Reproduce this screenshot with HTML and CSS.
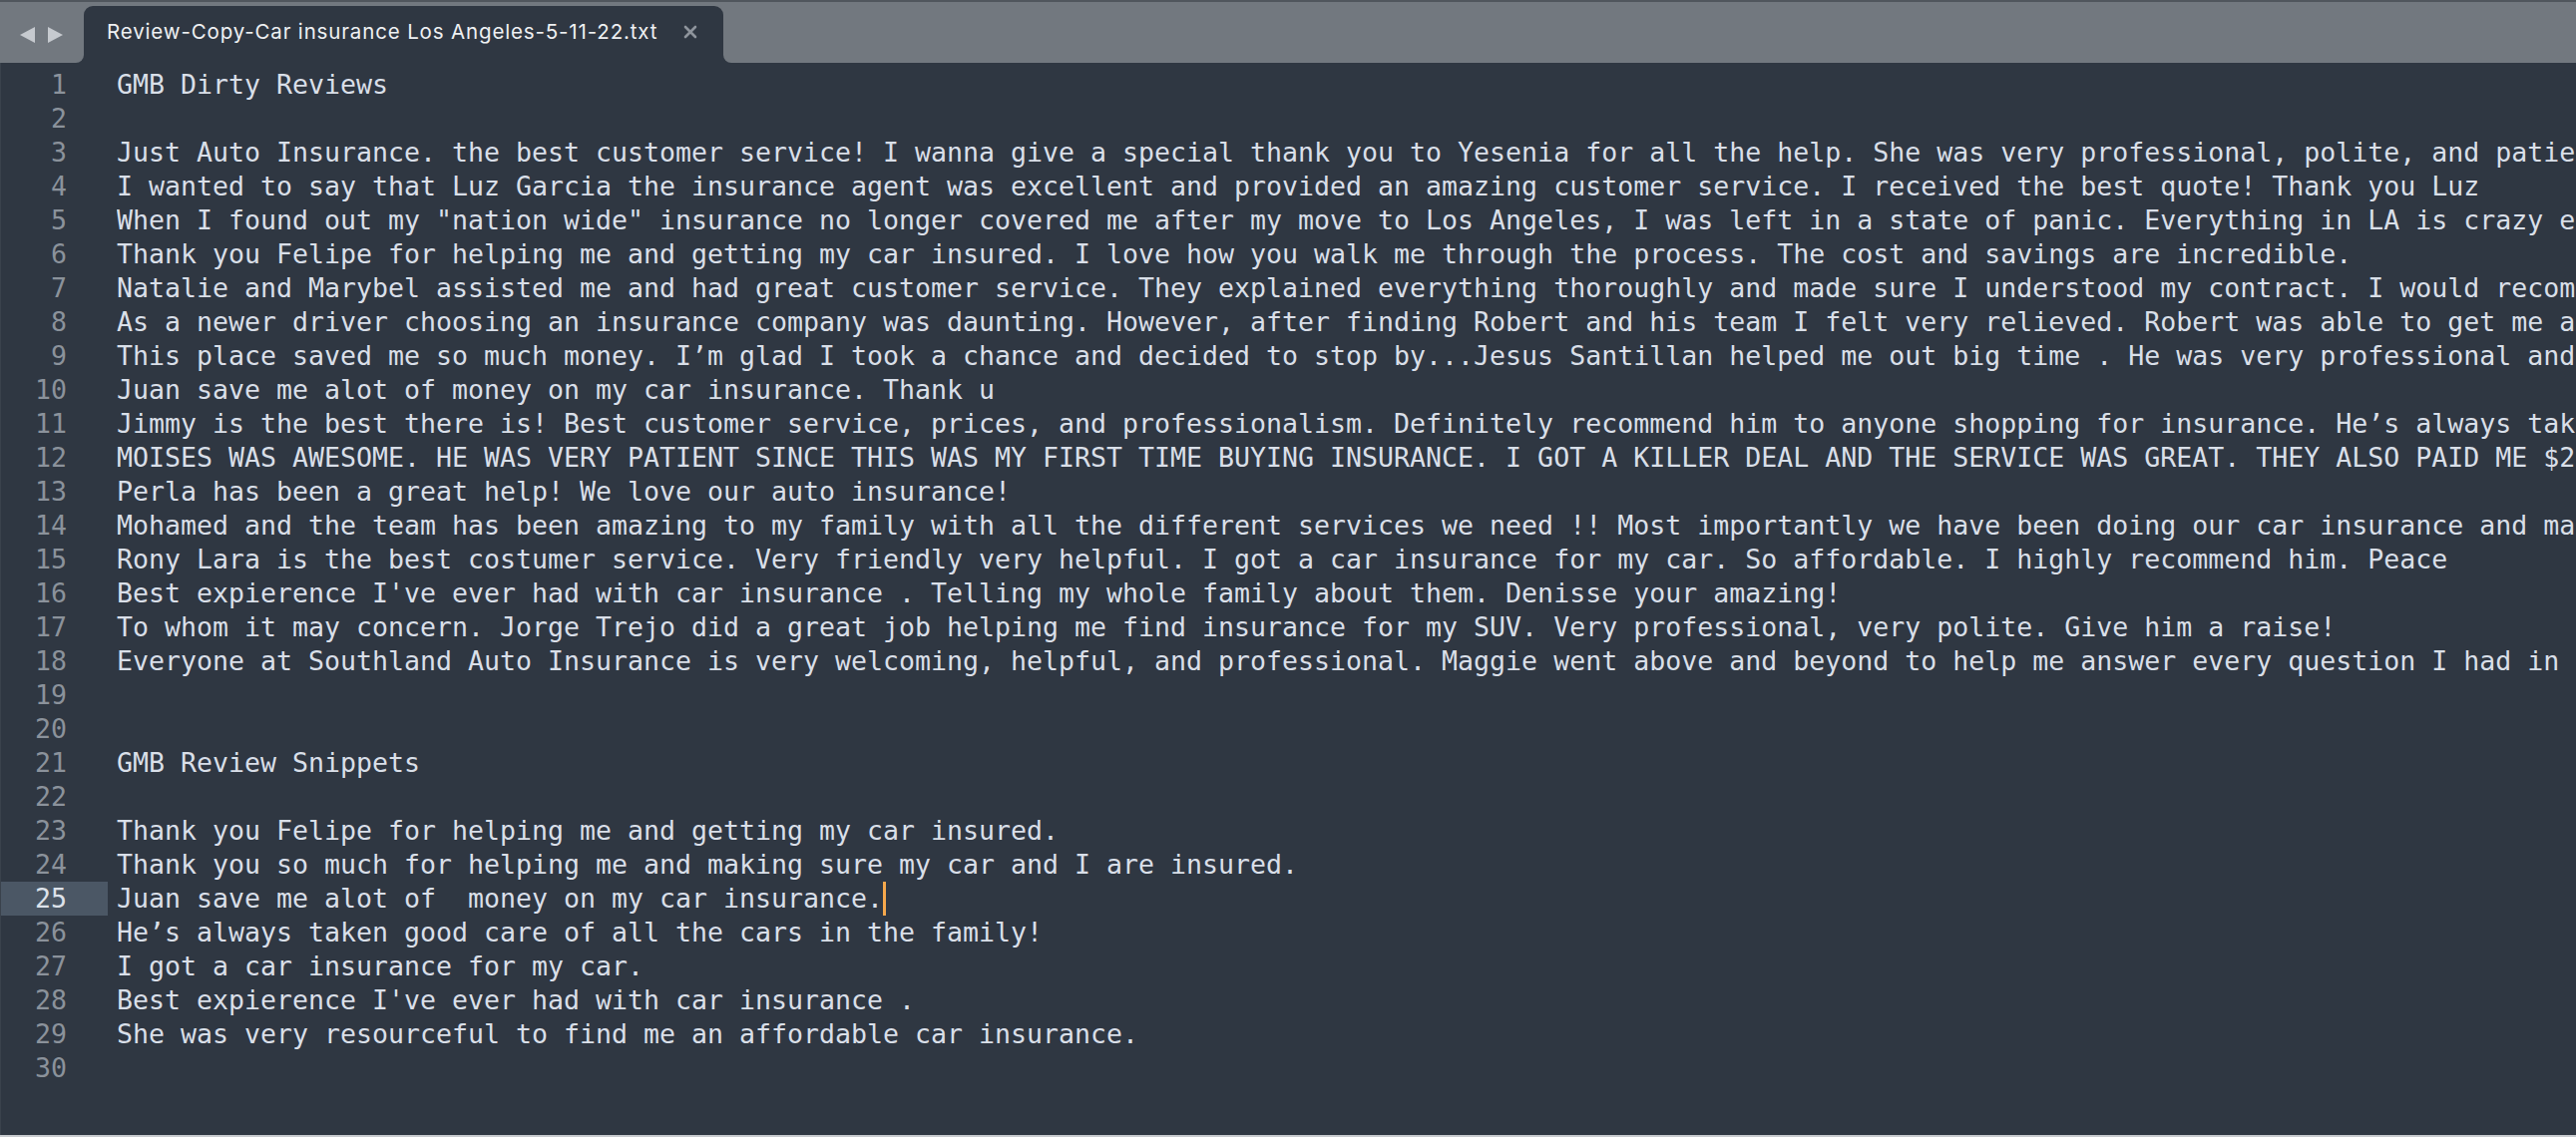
FILE: index.html
```html
<!DOCTYPE html>
<html>
<head>
<meta charset="utf-8">
<title>Review-Copy-Car insurance Los Angeles-5-11-22.txt</title>
<link rel="stylesheet" href="styles.css">
</head>
<body>
<div class="window">
  <div class="topline"></div>
  <div class="tabbar">
    <div class="nav">
      <svg class="arrows" width="44" height="18" viewBox="0 0 44 18">
        <polygon points="0,9 15,1 15,17" fill="#c6cacf"/>
        <polygon points="28,1 43,9 28,17" fill="#c6cacf"/>
      </svg>
    </div>
    <div class="tab">
      <span class="tab-title">Review-Copy-Car insurance Los Angeles-5-11-22.txt</span>
      <svg class="tab-close" width="14" height="14" viewBox="0 0 14 14">
        <path d="M2 2 L12 12 M12 2 L2 12" stroke="#8e949c" stroke-width="2.6" stroke-linecap="round"/>
      </svg>
    </div>
    <div class="rest"></div>
  </div>
  <div class="editor">
    <div class="row"><span class="ln">1</span><span class="tx">GMB Dirty Reviews</span></div>
    <div class="row"><span class="ln">2</span><span class="tx"></span></div>
    <div class="row"><span class="ln">3</span><span class="tx">Just Auto Insurance. the best customer service! I wanna give a special thank you to Yesenia for all the help. She was very professional, polite, and patient with me.</span></div>
    <div class="row"><span class="ln">4</span><span class="tx">I wanted to say that Luz Garcia the insurance agent was excellent and provided an amazing customer service. I received the best quote! Thank you Luz</span></div>
    <div class="row"><span class="ln">5</span><span class="tx">When I found out my "nation wide" insurance no longer covered me after my move to Los Angeles, I was left in a state of panic. Everything in LA is crazy expensive.</span></div>
    <div class="row"><span class="ln">6</span><span class="tx">Thank you Felipe for helping me and getting my car insured. I love how you walk me through the process. The cost and savings are incredible.</span></div>
    <div class="row"><span class="ln">7</span><span class="tx">Natalie and Marybel assisted me and had great customer service. They explained everything thoroughly and made sure I understood my contract. I would recommend them.</span></div>
    <div class="row"><span class="ln">8</span><span class="tx">As a newer driver choosing an insurance company was daunting. However, after finding Robert and his team I felt very relieved. Robert was able to get me an amazing rate.</span></div>
    <div class="row"><span class="ln">9</span><span class="tx">This place saved me so much money. I’m glad I took a chance and decided to stop by...Jesus Santillan helped me out big time . He was very professional and kind.</span></div>
    <div class="row"><span class="ln">10</span><span class="tx">Juan save me alot of money on my car insurance. Thank u</span></div>
    <div class="row"><span class="ln">11</span><span class="tx">Jimmy is the best there is! Best customer service, prices, and professionalism. Definitely recommend him to anyone shopping for insurance. He’s always taken good care of us.</span></div>
    <div class="row"><span class="ln">12</span><span class="tx">MOISES WAS AWESOME. HE WAS VERY PATIENT SINCE THIS WAS MY FIRST TIME BUYING INSURANCE. I GOT A KILLER DEAL AND THE SERVICE WAS GREAT. THEY ALSO PAID ME $20 FOR A REFERRAL.</span></div>
    <div class="row"><span class="ln">13</span><span class="tx">Perla has been a great help! We love our auto insurance!</span></div>
    <div class="row"><span class="ln">14</span><span class="tx">Mohamed and the team has been amazing to my family with all the different services we need !! Most importantly we have been doing our car insurance and many more.</span></div>
    <div class="row"><span class="ln">15</span><span class="tx">Rony Lara is the best costumer service. Very friendly very helpful. I got a car insurance for my car. So affordable. I highly recommend him. Peace</span></div>
    <div class="row"><span class="ln">16</span><span class="tx">Best expierence I've ever had with car insurance . Telling my whole family about them. Denisse your amazing!</span></div>
    <div class="row"><span class="ln">17</span><span class="tx">To whom it may concern. Jorge Trejo did a great job helping me find insurance for my SUV. Very professional, very polite. Give him a raise!</span></div>
    <div class="row"><span class="ln">18</span><span class="tx">Everyone at Southland Auto Insurance is very welcoming, helpful, and professional. Maggie went above and beyond to help me answer every question I had in regards to my policy.</span></div>
    <div class="row"><span class="ln">19</span><span class="tx"></span></div>
    <div class="row"><span class="ln">20</span><span class="tx"></span></div>
    <div class="row"><span class="ln">21</span><span class="tx">GMB Review Snippets</span></div>
    <div class="row"><span class="ln">22</span><span class="tx"></span></div>
    <div class="row"><span class="ln">23</span><span class="tx">Thank you Felipe for helping me and getting my car insured.</span></div>
    <div class="row"><span class="ln">24</span><span class="tx">Thank you so much for helping me and making sure my car and I are insured.</span></div>
    <div class="row current"><span class="ln">25</span><span class="tx">Juan save me alot of  money on my car insurance.<span class="caret"></span></span></div>
    <div class="row"><span class="ln">26</span><span class="tx">He’s always taken good care of all the cars in the family!</span></div>
    <div class="row"><span class="ln">27</span><span class="tx">I got a car insurance for my car.</span></div>
    <div class="row"><span class="ln">28</span><span class="tx">Best expierence I've ever had with car insurance .</span></div>
    <div class="row"><span class="ln">29</span><span class="tx">She was very resourceful to find me an affordable car insurance.</span></div>
    <div class="row"><span class="ln">30</span><span class="tx"></span></div>
  </div>
  <div class="bottomline"></div>
</div>
</body>
</html>
```

FILE: styles.css
```css
html, body {
  margin: 0;
  padding: 0;
  width: 100%;
  height: 100%;
  overflow: hidden;
  background: #2f3742;
}

.window {
  display: flex;
  flex-direction: column;
  height: 100vh;
  width: 100vw;
  overflow: hidden;
}

.topline {
  height: 2px;
  flex: none;
  background: #50565d;
}

.tabbar {
  height: 61px;
  flex: none;
  display: flex;
  background: linear-gradient(to bottom, #72787f 0, #72787f calc(100% - 12px), #2f3742 calc(100% - 12px));
}

.nav {
  width: 84px;
  flex: none;
  background: #72787f;
  border-bottom-right-radius: 8px;
  display: flex;
  align-items: flex-start;
  padding-top: 24px;
  padding-left: 20px;
  box-sizing: border-box;
}

.arrows {
  display: block;
}

.tab {
  width: 641px;
  flex: none;
  margin-top: 4px;
  background: #2f3742;
  border-top-left-radius: 9px;
  border-top-right-radius: 9px;
  display: flex;
  align-items: flex-start;
  box-sizing: border-box;
  padding-left: 23px;
  padding-top: 14px;
}

.tab-title {
  font-family: Inter, Roboto, "Liberation Sans", sans-serif;
  font-size: 20.5px;
  line-height: 24px;
  letter-spacing: 0.85px;
  color: #eef0f2;
  white-space: nowrap;
}

.tab-close {
  margin-left: 26px;
  margin-top: 5px;
  flex: none;
}

.rest {
  flex: 1;
  background: #72787f;
  border-bottom-left-radius: 8px;
}

.editor {
  flex: 1;
  padding-top: 5px;
  font-family: "DejaVu Sans Mono", "Liberation Mono", monospace;
  font-size: 26.58px;
  line-height: 34px;
  color: #d9dfe8;
  border-left: 1px solid #3a424c;
  overflow: hidden;
}

.row {
  display: flex;
  height: 34px;
  white-space: pre;
}

.ln {
  width: 107px;
  flex: none;
  box-sizing: border-box;
  padding-right: 41px;
  text-align: right;
  color: #8b929b;
}

.tx {
  margin-left: 9px;
  flex: 1;
  overflow: hidden;
  white-space: pre;
}

.current .ln {
  background: #4b5765;
  color: #dde2ea;
}

.caret {
  position: relative;
  display: inline-block;
  width: 0;
  height: 34px;
  vertical-align: top;
}

.caret::after {
  content: "";
  position: absolute;
  left: 0;
  top: -8px;
  width: 3px;
  height: 49px;
  background: #f6a84c;
}

.bottomline {
  height: 2px;
  flex: none;
  background: #c8cbcf;
}
```
